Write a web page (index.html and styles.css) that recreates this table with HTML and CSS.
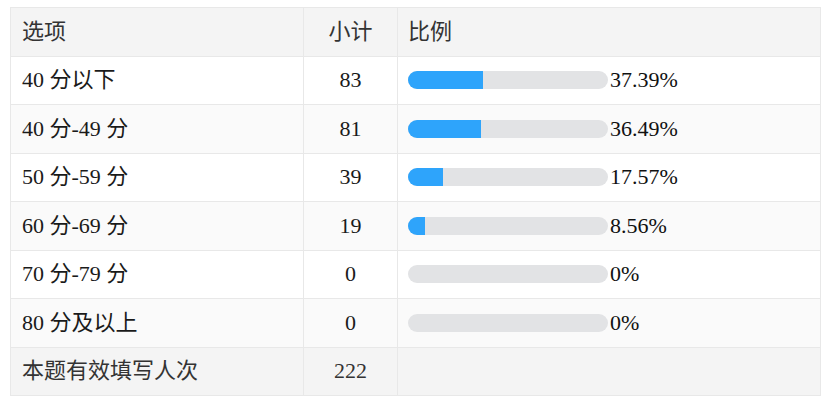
FILE: index.html
```html
<!DOCTYPE html>
<html lang="zh">
<head>
<meta charset="utf-8">
<link rel="stylesheet" href="styles.css">
</head>
<body>
<table class="stats">
  <colgroup><col class="c1"><col class="c2"><col class="c3"></colgroup>
  <thead>
    <tr class="head"><td>选项</td><td class="num">小计</td><td class="ratio">比例</td></tr>
  </thead>
  <tbody>
    <tr><td>40 分以下</td><td class="num">83</td><td class="ratio"><div class="pct"><div class="track"><div class="fill" style="width:37.39%"></div></div><span>37.39%</span></div></td></tr>
    <tr class="alt"><td>40 分-49 分</td><td class="num">81</td><td class="ratio"><div class="pct"><div class="track"><div class="fill" style="width:36.49%"></div></div><span>36.49%</span></div></td></tr>
    <tr><td>50 分-59 分</td><td class="num">39</td><td class="ratio"><div class="pct"><div class="track"><div class="fill" style="width:17.57%"></div></div><span>17.57%</span></div></td></tr>
    <tr class="alt"><td>60 分-69 分</td><td class="num">19</td><td class="ratio"><div class="pct"><div class="track"><div class="fill" style="width:8.56%"></div></div><span>8.56%</span></div></td></tr>
    <tr><td>70 分-79 分</td><td class="num">0</td><td class="ratio"><div class="pct"><div class="track"><div class="fill" style="width:0%"></div></div><span>0%</span></div></td></tr>
    <tr class="alt"><td>80 分及以上</td><td class="num">0</td><td class="ratio"><div class="pct"><div class="track"><div class="fill" style="width:0%"></div></div><span>0%</span></div></td></tr>
    <tr class="total"><td>本题有效填写人次</td><td class="num">222</td><td class="ratio"></td></tr>
  </tbody>
</table>
</body>
</html>
```
FILE: styles.css
```css
html, body {
  margin: 0;
  background: #ffffff;
}
body {
  padding: 7px 10px 0 10px;
  font-family: "Liberation Serif", "Noto Sans CJK SC", serif;
  font-size: 22px;
  color: #1a1a1a;
}
.stats {
  width: 811px;
  border-collapse: collapse;
  table-layout: fixed;
  border: 1px solid #e8e8e8;
}
.c1 { width: 293px; }
.c2 { width: 94px; }
.c3 { width: auto; }
.stats td {
  border: 1px solid #e8e8e8;
  height: 47.5px;
  padding: 0 0 0 11px;
  vertical-align: middle;
  line-height: 24px;
}
.stats td.num {
  text-align: center;
  padding: 0;
}
.stats td.ratio {
  padding-left: 10px;
}
.head td, .total td {
  background: #f4f4f4;
  color: #333;
}
.alt td {
  background: #fafafa;
}
.pct {
  display: flex;
  align-items: center;
}
.track {
  width: 200px;
  height: 18px;
  border-radius: 9px;
  background: #e2e3e5;
  overflow: hidden;
  flex: none;
}
.fill {
  height: 100%;
  background: #2ea4fb;
}
.pct span {
  margin-left: 2px;
  color: #111;
}
```
